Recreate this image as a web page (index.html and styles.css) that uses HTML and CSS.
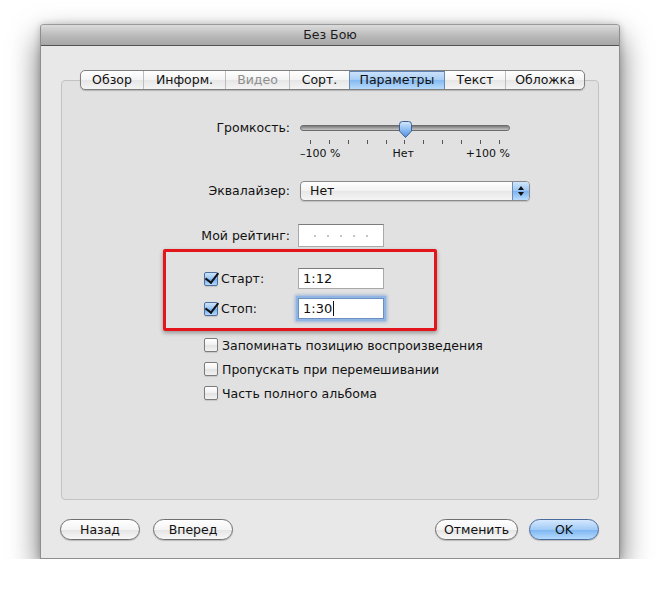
FILE: index.html
```html
<!DOCTYPE html>
<html lang="ru">
<head>
  <meta charset="UTF-8" />
  <title>Без Бою</title>
  <link rel="stylesheet" href="styles.css">
</head>
<body>

<div class="window">
  <div class="titlebar">Без Бою</div>

  <div class="content">
    <div class="tabs">
      <div class="tab tab-1">Обзор</div>
      <div class="tab tab-2">Информ.</div>
      <div class="tab tab-3 disabled">Видео</div>
      <div class="tab tab-4">Сорт.</div>
      <div class="tab tab-5 active">Параметры</div>
      <div class="tab tab-6">Текст</div>
      <div class="tab tab-7">Обложка</div>
    </div>

    <div class="panel">
      <div class="field field-volume">
        <div class="field-label">Громкость:</div>
        <div class="slider">
          <div class="slider-rail">
            <div class="slider-track"></div>
            <svg class="slider-thumb" width="15" height="18" viewBox="0 0 15 18">
              <defs>
                <linearGradient id="thumbFill" x1="0" y1="0" x2="0" y2="1">
                  <stop offset="0" stop-color="#d7e8fc" />
                  <stop offset="0.5" stop-color="#8dbdf3" />
                  <stop offset="1" stop-color="#4f8fe0" />
                </linearGradient>
              </defs>
              <path d="M1.5 3.5 Q1.5 0.5 4.5 0.5 H10.5 Q13.5 0.5 13.5 3.5 V10 L7.5 16.5 L1.5 10 Z"
                    fill="url(#thumbFill)" stroke="#3f5f8f" stroke-width="1" />
            </svg>
          </div>
          <div class="ticks">
            <span></span><span></span><span></span><span></span><span></span><span></span>
            <span></span><span></span><span></span><span></span><span></span>
          </div>
          <div class="slider-labels">
            <span>–100 %</span>
            <span>Нет</span>
            <span>+100 %</span>
          </div>
        </div>
      </div>

      <div class="field field-eq">
        <div class="field-label">Эквалайзер:</div>
        <div class="popup">
          <span class="popup-value">Нет</span>
          <span class="popup-arrows">
            <svg width="8" height="12" viewBox="0 0 8 12">
              <path d="M4 1 L7 5 H1 Z" fill="#111" />
              <path d="M4 11 L7 7 H1 Z" fill="#111" />
            </svg>
          </span>
        </div>
      </div>

      <div class="field field-rating">
        <div class="field-label">Мой рейтинг:</div>
        <div class="rating">
          <i></i><i></i><i></i><i></i><i></i>
        </div>
      </div>

      <div class="highlight-box">
        <div class="time-row row-start">
          <span class="checkbox checked"></span>
          <span class="time-label">Старт:</span>
          <span class="textfield">1:12</span>
        </div>
        <div class="time-row row-stop">
          <span class="checkbox checked"></span>
          <span class="time-label">Стоп:</span>
          <span class="textfield focused">1:30<span class="caret"></span></span>
        </div>
      </div>

      <div class="options">
        <div class="option"><span class="checkbox"></span>Запоминать позицию воспроизведения</div>
        <div class="option"><span class="checkbox"></span>Пропускать при перемешивании</div>
        <div class="option"><span class="checkbox"></span>Часть полного альбома</div>
      </div>
    </div>

    <div class="buttons">
      <div class="button-group">
        <button class="btn btn-back">Назад</button>
        <button class="btn btn-next">Вперед</button>
      </div>
      <div class="button-group right">
        <button class="btn btn-cancel">Отменить</button>
        <button class="btn btn-ok default">OK</button>
      </div>
    </div>
  </div>
</div>

</body>
</html>
```

FILE: styles.css
```css
* {
  box-sizing: border-box;
}

body {
  margin: 0;
  background: #fff;
  font-family: "DejaVu Sans", "Noto Sans", sans-serif;
  font-size: 12.5px;
  color: #111;
}

.window {
  margin: 24px 0 0 40px;
  width: 580px;
  height: 535px;
  background: #e8e8e8;
  border: 1px solid #8e8e8e;
  border-top-color: #9a9a9a;
  border-radius: 4px 4px 0 0;
  box-shadow: 0 14px 30px rgba(0, 0, 0, 0.58), 0 0 7px rgba(0, 0, 0, 0.2);
}

.titlebar {
  height: 21px;
  line-height: 20px;
  text-align: center;
  font-size: 12.5px;
  color: #1c1c1c;
  background: linear-gradient(#dcdcdc, #b9b9b9 55%, #a7a7a7);
  border-bottom: 1px solid #525252;
  border-radius: 3px 3px 0 0;
}

.content {
  padding: 24px 20px 0 20px;
}

/* segmented tabs */
.tabs {
  position: relative;
  z-index: 1;
  display: flex;
  width: 505px;
  height: 20px;
  margin-left: 19px;
  border: 1px solid #7f7f7f;
  border-radius: 5px;
  background: linear-gradient(#ffffff, #f3f3f3 50%, #e6e6e6 51%, #f4f4f4);
  box-shadow: 0 1px 1px rgba(0, 0, 0, 0.2);
  overflow: hidden;
}

.tab {
  height: 18px;
  line-height: 18px;
  text-align: center;
  border-left: 1px solid #bdbdbd;
}

.tab-1 { width: 62px; border-left: none; }
.tab-2 { width: 82px; }
.tab-3 { width: 64px; }
.tab-4 { width: 60px; }
.tab-5 { width: 96px; }
.tab-6 { width: 60px; }
.tab-7 { width: 79px; }

.tab.disabled {
  color: #8e8e8e;
}

.tab.active {
  background: linear-gradient(#cfe4fb, #a6cdf6 50%, #84b9f1 51%, #b8dbfc);
  border-left-color: #6a89b4;
  border-right: 1px solid #6a89b4;
  box-shadow: inset 0 1px 0 #6082b3;
}

.tab.active + .tab {
  border-left: none;
}

.panel {
  margin-top: -10px;
  height: 420px;
  padding-top: 40px;
  background: #e1e1e1;
  border: 1px solid #c2c2c2;
  border-radius: 4px;
}

/* label + control rows */
.field {
  display: flex;
  align-items: flex-start;
}

.field-label {
  width: 228px;
  margin-right: 10px;
  text-align: right;
}

.field-volume .field-label {
  line-height: 14px;
}

.field-eq {
  margin-top: 21px;
}

.field-eq .field-label {
  line-height: 20px;
}

.field-rating {
  margin-top: 23px;
}

.field-rating .field-label {
  line-height: 23px;
}

/* slider */
.slider {
  width: 210px;
}

.slider-rail {
  position: relative;
  height: 17px;
}

.slider-track {
  position: absolute;
  top: 4px;
  left: 0;
  right: 0;
  height: 6px;
  border-radius: 3px;
  background: linear-gradient(#7a7a7a, #a9a9a9 60%, #c4c4c4);
  border: 1px solid #6c6c6c;
}

.slider-thumb {
  position: absolute;
  top: 0;
  left: 98px;
}

.ticks {
  display: flex;
  justify-content: space-between;
  margin-top: 2px;
  padding: 0 10px;
  height: 4px;
}

.ticks span {
  width: 1px;
  height: 4px;
  background: #555;
}

.slider-labels {
  display: flex;
  justify-content: space-between;
  margin-top: 3px;
  line-height: 13px;
  font-size: 11px;
}

/* popup button */
.popup {
  display: flex;
  width: 230px;
  height: 20px;
  border: 1px solid #8a8a8a;
  border-radius: 4px;
  background: linear-gradient(#ffffff, #f2f2f2 50%, #e7e7e7 51%, #f5f5f5);
  box-shadow: 0 1px 1px rgba(0, 0, 0, 0.15);
  overflow: hidden;
}

.popup-value {
  flex: 1;
  padding-left: 9px;
  line-height: 18px;
}

.popup-arrows {
  width: 17px;
  display: flex;
  align-items: center;
  justify-content: center;
  border-left: 1px solid #6c8ab6;
  background: linear-gradient(#d2e6fc, #99c6f5 50%, #7bb3ef 51%, #b9dcfd);
}

/* rating */
.rating {
  display: flex;
  align-items: center;
  gap: 11px;
  width: 86px;
  height: 23px;
  margin-left: -2px;
  padding-left: 15px;
  background: #fff;
  border: 1px solid #a8a8a8;
  border-top-color: #7c7c7c;
}

.rating i {
  width: 2px;
  height: 2px;
  background: #c4c4c4;
}

/* red annotation box */
.highlight-box {
  width: 274px;
  height: 82px;
  margin: 2px 0 0 101px;
  padding: 16px 0 0 38px;
  border: 3px solid #e3141a;
  border-radius: 2px;
  box-shadow: 0 2px 4px rgba(0, 0, 0, 0.35);
}

.time-row {
  display: flex;
  align-items: center;
  height: 21px;
}

.row-stop {
  margin-top: 9px;
}

.time-label {
  width: 80px;
  padding-left: 3px;
}

.textfield {
  display: flex;
  align-items: center;
  width: 86px;
  height: 21px;
  padding-left: 4px;
  font-size: 13px;
  background: #fff;
  border: 1px solid #a8a8a8;
  border-top-color: #7c7c7c;
}

.textfield.focused {
  border-color: #6d8fc0;
  box-shadow: 0 0 0 2px #8fb5e4, 0 0 3px 3px rgba(95, 140, 210, 0.55);
}

.caret {
  width: 1px;
  height: 15px;
  margin-left: 1px;
  background: #111;
}

/* checkboxes */
.checkbox {
  display: inline-block;
  flex: none;
  width: 14px;
  height: 14px;
  border: 1px solid #7b7b7b;
  border-radius: 2px;
  background: linear-gradient(#ffffff, #f0f0f0 50%, #e2e2e2 51%, #f2f2f2);
  box-shadow: 0 1px 1px rgba(0, 0, 0, 0.12);
}

.checkbox.checked {
  position: relative;
  border-color: #4f6f9e;
  background: linear-gradient(#cfe4fb, #95c3f4 50%, #70abee 51%, #b4d8fc);
}

.checkbox.checked::after {
  content: "";
  position: absolute;
  left: 3px;
  top: -3px;
  width: 6px;
  height: 11px;
  border-right: 2.5px solid #111;
  border-bottom: 2.5px solid #111;
  transform: rotate(38deg);
}

.options {
  margin-top: 2px;
}

.option {
  display: flex;
  align-items: center;
  height: 24px;
  padding-left: 142px;
}

.option .checkbox {
  margin-right: 4px;
}

/* bottom buttons */
.buttons {
  display: flex;
  justify-content: space-between;
  margin-top: 19px;
}

.button-group {
  display: flex;
  gap: 13px;
}

.button-group.right {
  gap: 11px;
}

.btn {
  height: 21px;
  padding: 0;
  font-family: inherit;
  font-size: 12.5px;
  color: #111;
  border: 1px solid #6f6f6f;
  border-radius: 11px;
  background: linear-gradient(#ffffff, #f4f4f4 50%, #e4e4e4 51%, #f7f7f7);
  box-shadow: 0 1px 1px rgba(0, 0, 0, 0.2);
}

.btn-back { width: 80px; margin-left: -1px; }
.btn-next { width: 80px; }
.btn-cancel { width: 83px; }
.btn-ok { width: 70px; }

.btn.default {
  border-color: #4a6a9c;
  background: linear-gradient(#d4e8fd, #a1cbf6 50%, #7bb4f0 51%, #b6dbfd);
}
```
